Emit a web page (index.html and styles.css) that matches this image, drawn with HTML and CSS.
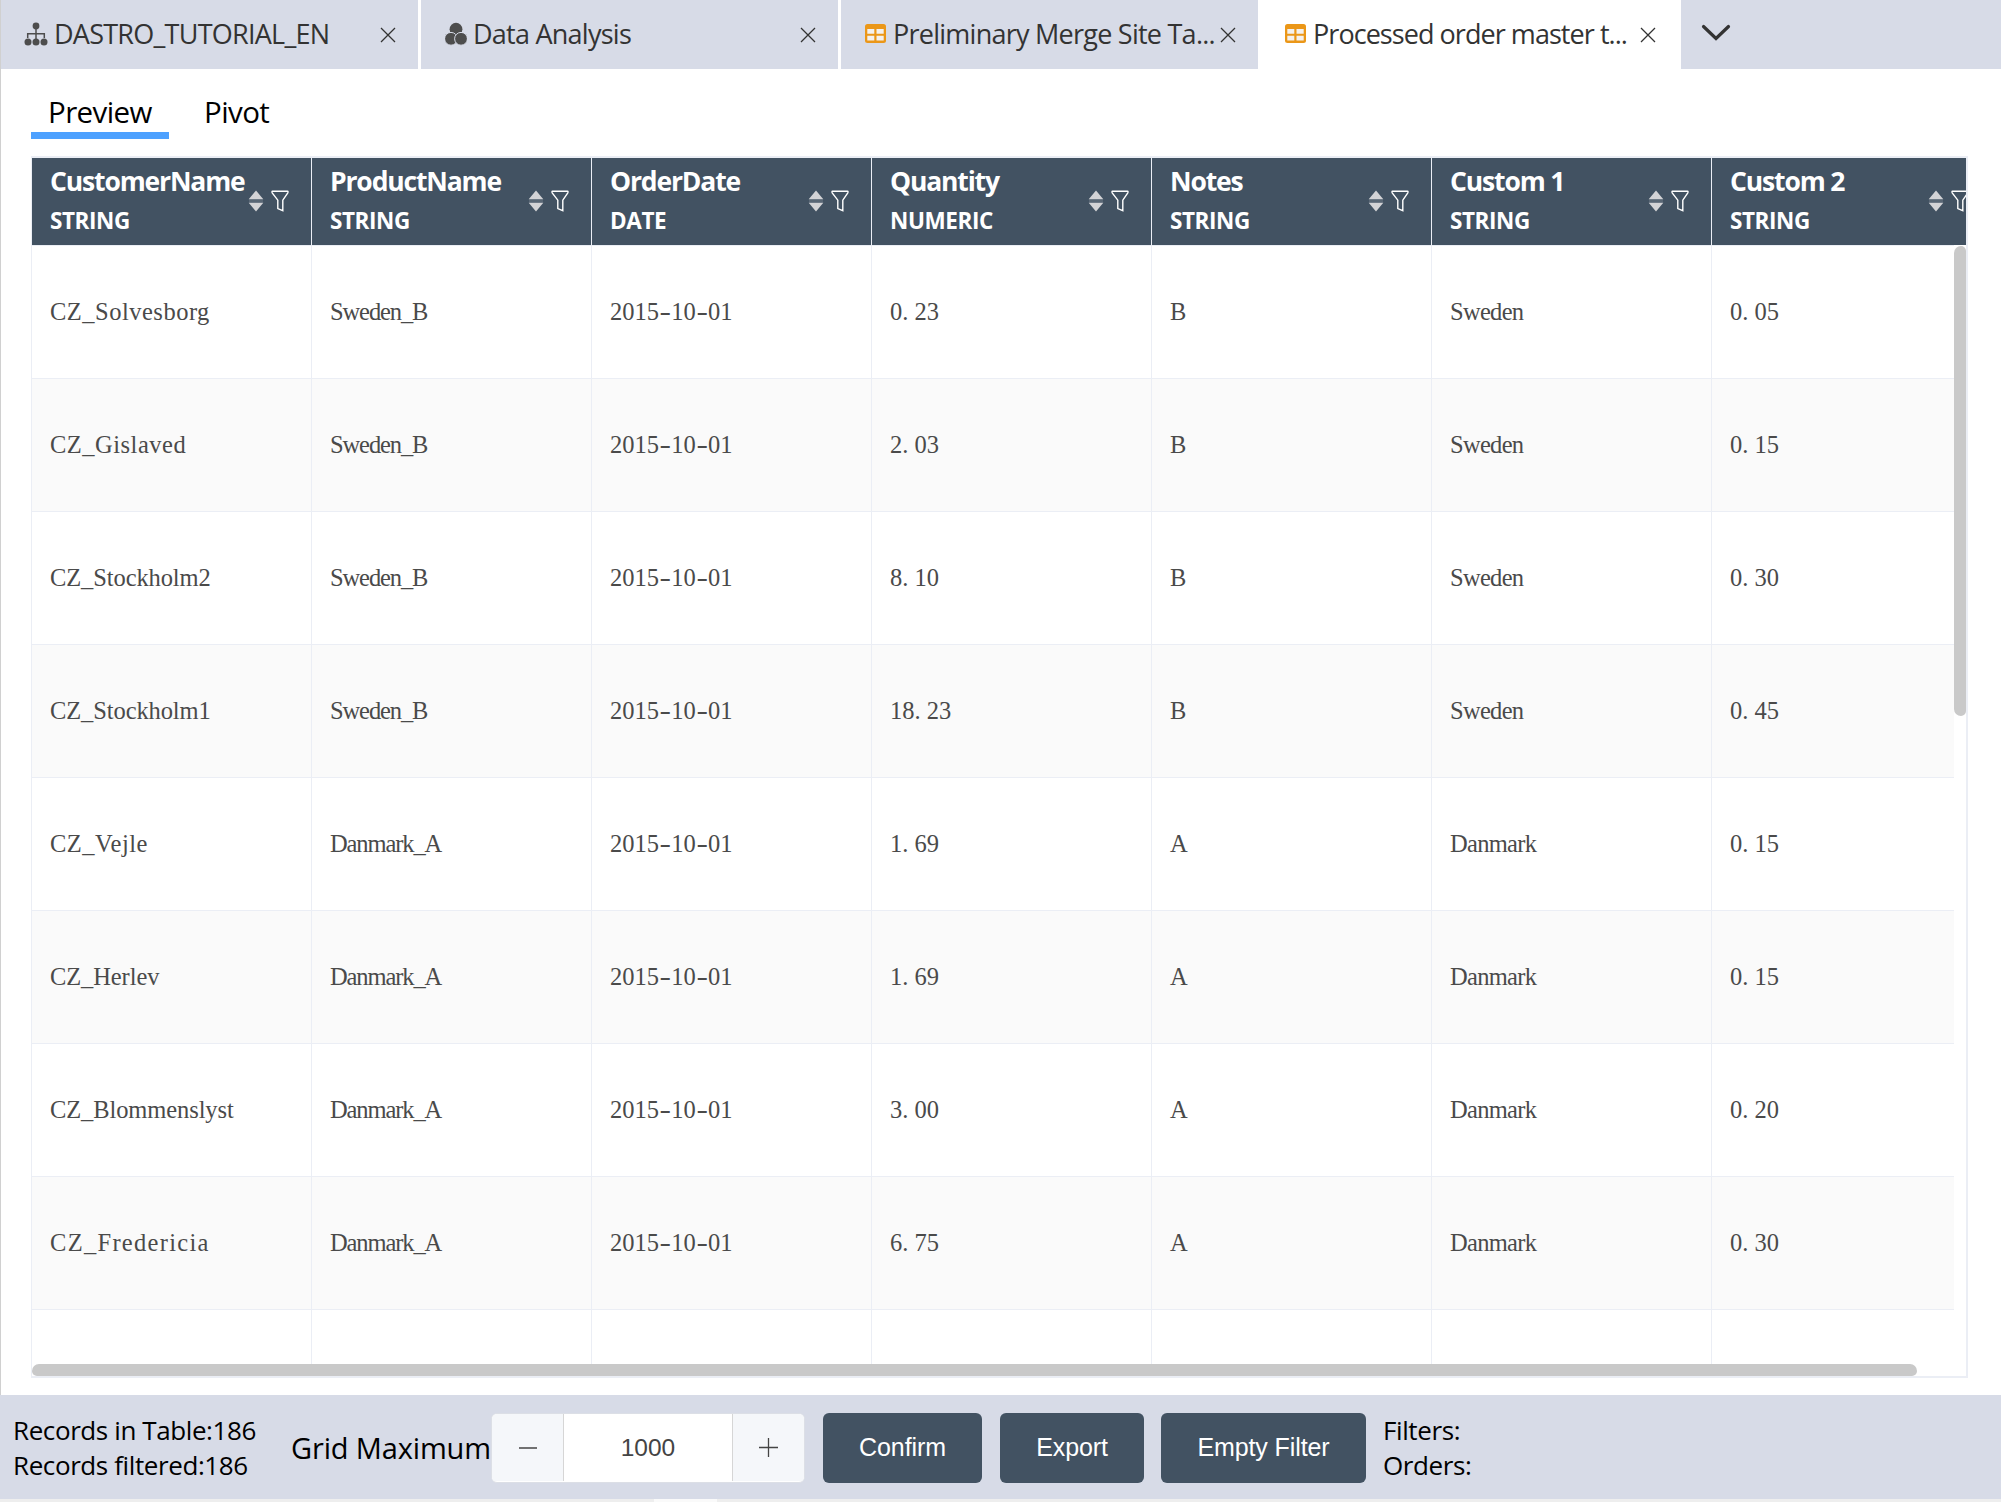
FILE: index.html
```html
<!DOCTYPE html>
<html lang="en">
<head>
    <meta charset="UTF-8">
    <meta name="viewport" content="width=device-width, initial-scale=1.0">
    <title>Processed order master table</title>
    <link rel="stylesheet" href="styles.css">
</head>
<body>
    <!-- icons shared by the tabs and the grid header -->
    <svg class="symbols">
        <symbol id="close" viewBox="0 0 16 16"><path d="M1 1L15 15M15 1L1 15" fill="none" stroke="#333" stroke-width="1.3"/></symbol>
        <symbol id="tree" viewBox="0 0 24 24">
            <circle cx="12" cy="4" r="3.4"/><circle cx="4" cy="20" r="3.5"/><circle cx="12" cy="20" r="3.5"/><circle cx="20" cy="20" r="3.5"/>
            <path d="M12 6V17M3.7 16V11.7H20.3V16" fill="none" stroke="#4d4d4d" stroke-width="1.5"/>
        </symbol>
        <symbol id="cubes" viewBox="0 0 22 24">
            <circle cx="11" cy="7.2" r="6.4"/>
            <circle cx="6" cy="16.8" r="6.4" stroke="#d7dbe7" stroke-width="1"/>
            <circle cx="16" cy="16.8" r="6.4" stroke="#d7dbe7" stroke-width="1"/>
        </symbol>
        <symbol id="grid" viewBox="0 0 22 20">
            <rect x="0" y="0" width="21" height="19" rx="2.5" fill="#eb9718"/>
            <path d="M2.3 5H9.3V9.8H2.3ZM11.5 5H18.7V9.8H11.5ZM2.3 11.7H9.3V16.5H2.3ZM11.5 11.7H18.7V16.5H11.5Z" fill="#f4f1ee"/>
        </symbol>
        <symbol id="sort" viewBox="0 0 16 22">
            <path d="M8 0.5L15.3 9.3H0.7ZM8 21.5L15.3 12.7H0.7Z" fill="#d3d3d6"/>
            <path d="M1 10H15M1 12H15" stroke="#7c8793" stroke-width="0.8"/>
        </symbol>
        <symbol id="funnel" viewBox="0 0 18 22">
            <path d="M1.5 1.2H16.5Q17.4 1.4 16.8 2.8L11.8 10.2V20.6L6.8 18.6V10.2L1.2 2.8Q0.6 1.4 1.5 1.2Z" fill="none" stroke="#fff" stroke-width="1.4"/>
        </symbol>
    </svg>

    <div class="page">
        <div class="tabs">
            <div class="tab">
                <svg class="tab-icon tree"><use href="#tree"/></svg>
                <span class="tab-title">DASTRO_TUTORIAL_EN</span>
                <svg class="close"><use href="#close"/></svg>
            </div>
            <div class="tab">
                <svg class="tab-icon"><use href="#cubes"/></svg>
                <span class="tab-title">Data Analysis</span>
                <svg class="close"><use href="#close"/></svg>
            </div>
            <div class="tab">
                <svg class="tab-icon grid-icon"><use href="#grid"/></svg>
                <span class="tab-title">Preliminary Merge Site Ta...</span>
                <svg class="close"><use href="#close"/></svg>
            </div>
            <div class="tab active">
                <svg class="tab-icon grid-icon"><use href="#grid"/></svg>
                <span class="tab-title">Processed order master t...</span>
                <svg class="close"><use href="#close"/></svg>
            </div>
            <div class="more">
                <svg viewBox="0 0 30 18" width="30" height="18"><path d="M2.5 2.5L15 14.5L27.5 2.5" fill="none" stroke="#333" stroke-width="3.2" stroke-linecap="round"/></svg>
            </div>
        </div>

        <div class="views">
            <div class="view selected">Preview</div>
            <div class="view">Pivot</div>
        </div>

        <div class="table-box">
            <table class="head">
                <tr>
                    <th><div class="th"><div><p class="name">CustomerName</p><p class="type">STRING</p></div><div class="tools"><svg class="sort"><use href="#sort"/></svg><svg class="funnel"><use href="#funnel"/></svg></div></div></th>
                    <th><div class="th"><div><p class="name">ProductName</p><p class="type">STRING</p></div><div class="tools"><svg class="sort"><use href="#sort"/></svg><svg class="funnel"><use href="#funnel"/></svg></div></div></th>
                    <th><div class="th"><div><p class="name">OrderDate</p><p class="type">DATE</p></div><div class="tools"><svg class="sort"><use href="#sort"/></svg><svg class="funnel"><use href="#funnel"/></svg></div></div></th>
                    <th><div class="th"><div><p class="name">Quantity</p><p class="type">NUMERIC</p></div><div class="tools"><svg class="sort"><use href="#sort"/></svg><svg class="funnel"><use href="#funnel"/></svg></div></div></th>
                    <th><div class="th"><div><p class="name">Notes</p><p class="type">STRING</p></div><div class="tools"><svg class="sort"><use href="#sort"/></svg><svg class="funnel"><use href="#funnel"/></svg></div></div></th>
                    <th><div class="th"><div><p class="name">Custom 1</p><p class="type">STRING</p></div><div class="tools"><svg class="sort"><use href="#sort"/></svg><svg class="funnel"><use href="#funnel"/></svg></div></div></th>
                    <th><div class="th"><div><p class="name">Custom 2</p><p class="type">STRING</p></div><div class="tools"><svg class="sort"><use href="#sort"/></svg><svg class="funnel"><use href="#funnel"/></svg></div></div></th>
                </tr>
            </table>
            <div class="scroll-area">
                <table class="rows">
                    <tr><td class="customer">CZ_Solvesborg</td><td class="product">Sweden_B</td><td>2015<b>-</b>10<b>-</b>01</td><td>0<i>.</i>23</td><td>B</td><td class="country">Sweden</td><td>0<i>.</i>05</td></tr>
                    <tr><td class="customer">CZ_Gislaved</td><td class="product">Sweden_B</td><td>2015<b>-</b>10<b>-</b>01</td><td>2<i>.</i>03</td><td>B</td><td class="country">Sweden</td><td>0<i>.</i>15</td></tr>
                    <tr><td class="customer tight">CZ_Stockholm2</td><td class="product">Sweden_B</td><td>2015<b>-</b>10<b>-</b>01</td><td>8<i>.</i>10</td><td>B</td><td class="country">Sweden</td><td>0<i>.</i>30</td></tr>
                    <tr><td class="customer tight">CZ_Stockholm1</td><td class="product">Sweden_B</td><td>2015<b>-</b>10<b>-</b>01</td><td>18<i>.</i>23</td><td>B</td><td class="country">Sweden</td><td>0<i>.</i>45</td></tr>
                    <tr><td class="customer">CZ_Vejle</td><td class="product">Danmark_A</td><td>2015<b>-</b>10<b>-</b>01</td><td>1<i>.</i>69</td><td>A</td><td class="country">Danmark</td><td>0<i>.</i>15</td></tr>
                    <tr><td class="customer tight">CZ_Herlev</td><td class="product">Danmark_A</td><td>2015<b>-</b>10<b>-</b>01</td><td>1<i>.</i>69</td><td>A</td><td class="country">Danmark</td><td>0<i>.</i>15</td></tr>
                    <tr><td class="customer tight">CZ_Blommenslyst</td><td class="product">Danmark_A</td><td>2015<b>-</b>10<b>-</b>01</td><td>3<i>.</i>00</td><td>A</td><td class="country">Danmark</td><td>0<i>.</i>20</td></tr>
                    <tr><td class="customer wide">CZ_Fredericia</td><td class="product">Danmark_A</td><td>2015<b>-</b>10<b>-</b>01</td><td>6<i>.</i>75</td><td>A</td><td class="country">Danmark</td><td>0<i>.</i>30</td></tr>
                    <tr><td></td><td></td><td></td><td></td><td></td><td></td><td></td></tr>
                </table>
                <div class="scrollbar-y"></div>
                <div class="scrollbar-x"></div>
            </div>
        </div>
    </div>

    <div class="footer">
        <div class="records">
            <p>Records in Table:186</p>
            <p>Records filtered:186</p>
        </div>
        <div class="max-label">Grid Maximum</div>
        <div class="number">
            <div class="step minus"><svg viewBox="0 0 18 18" width="18" height="18"><path d="M0 9H18" stroke="#444" stroke-width="1.4"/></svg></div>
            <div class="value">1000</div>
            <div class="step plus"><svg viewBox="0 0 19 19" width="19" height="19"><path d="M0 9.5H19M9.5 0V19" stroke="#444" stroke-width="1.3"/></svg></div>
        </div>
        <button class="confirm">Confirm</button>
        <button class="export">Export</button>
        <button class="empty">Empty Filter</button>
        <div class="filters">
            <p>Filters:</p>
            <p>Orders:</p>
        </div>
    </div>
    <div class="bottom-strip"><div class="strip-handle"></div></div>
</body>
</html>
```
FILE: styles.css
```css
* {
    box-sizing: border-box;
}
body {
    margin: 0;
    width: 2001px;
    height: 1502px;
    overflow: hidden;
    background-color: #ffffff;
    font-family: "Segoe UI", "Open Sans", sans-serif;
    color: #000000;
}
p {
    margin: 0;
}
svg {
    display: block;
    flex: none;
}
.symbols {
    display: none;
}
.page {
    height: 1395px;
    border-left: 1px solid #d0d0d0;
}

/* tabs */
.tabs {
    display: flex;
    height: 69px;
}
.tab {
    display: flex;
    align-items: center;
    width: 420px;
    padding: 0 22px 0 23px;
    background-color: #d7dbe7;
    border-right: 3px solid #ffffff;
    color: #333333;
}
.tab.active {
    background-color: #ffffff;
}
.tab-icon {
    width: 22px;
    height: 24px;
    margin: 0 6px 2px 1px;
    fill: #4d4d4d;
}
.tab-icon.tree {
    width: 24px;
    margin: 0 6px 2px 0;
}
.tab-icon.grid-icon {
    height: 20px;
}
.tab-title {
    flex: 1;
    min-width: 0;
    padding-bottom: 2px;
    font-size: 27px;
    line-height: 40px;
    letter-spacing: -0.75px;
    white-space: nowrap;
}
.active .tab-title {
    letter-spacing: -0.95px;
}
.close {
    width: 16px;
    height: 16px;
}
.more {
    flex: 1;
    padding: 24px 0 0 20px;
    background-color: #d7dbe7;
}

/* preview / pivot */
.views {
    display: flex;
    height: 87px;
    padding: 21px 0 0 30px;
}
.view {
    height: 49px;
    padding: 0 17px;
    font-size: 29.5px;
    line-height: 44px;
    letter-spacing: -0.6px;
}
.view.selected {
    width: 138px;
    margin-right: 18px;
    border-bottom: 7px solid #4da1ff;
}

/* grid */
.table-box {
    width: 1937px;
    height: 1222px;
    margin-left: 30px;
    border: 2px solid #ebeef5;
    border-left-width: 1px;
    overflow: hidden;
}
table {
    table-layout: fixed;
    width: 1960px;
    border-collapse: separate;
    border-spacing: 0;
}
th {
    width: 280px;
    height: 87px;
    padding: 0;
    background-color: #425262;
    border-right: 1px solid #ebeef5;
    color: #ffffff;
    text-align: left;
}
.th {
    display: flex;
    justify-content: space-between;
    align-items: center;
    height: 87px;
    padding: 0 22px 2px 18px;
}
.name {
    font-size: 26.5px;
    line-height: 39px;
    letter-spacing: -1.15px;
}
.type {
    font-size: 22.5px;
    line-height: 39px;
    letter-spacing: -0.4px;
}
.tools {
    display: flex;
    gap: 7px;
}
.sort {
    width: 16px;
    height: 22px;
}
.funnel {
    width: 18px;
    height: 22px;
}
.scroll-area {
    position: relative;
    height: 1131px;
    padding-right: 12px;
    overflow: hidden;
}
.rows {
    border-top: 1px solid #ebeef5;
}
td {
    width: 280px;
    height: 133px;
    padding: 0 18px;
    border-right: 1px solid #ebeef5;
    border-bottom: 1px solid #ebeef5;
    font-family: NSimSun, "Liberation Serif", serif;
    font-size: 24.5px;
    color: #4a4a4a;
    white-space: nowrap;
}
tr:nth-child(even) td {
    background-color: #fafafa;
}
/* punctuation takes a full half-width cell, like the digits */
td i {
    font-style: normal;
    letter-spacing: 6px;
}
td b {
    display: inline-block;
    width: 0.5em;
    font-weight: normal;
    text-align: center;
    transform: scaleX(1.4);
}
.customer {
    letter-spacing: 0.5px;
}
.customer.tight {
    letter-spacing: -0.1px;
}
.customer.wide {
    letter-spacing: 1.3px;
}
.product {
    letter-spacing: -1.1px;
}
.country {
    letter-spacing: -0.7px;
}

/* scrollbars sit over the rows */
.scrollbar-y {
    position: absolute;
    top: 0;
    right: 0;
    width: 12px;
    height: 100%;
    background-color: #ffffff;
}
.scrollbar-y::before {
    content: "";
    display: block;
    height: 470px;
    margin-top: 1px;
    background-color: #c9c9c9;
    border-radius: 7px 5px 5px 7px;
}
.scrollbar-x {
    position: absolute;
    left: 0;
    bottom: 0;
    width: 100%;
    height: 12px;
    background-color: #ffffff;
}
.scrollbar-x::before {
    content: "";
    display: block;
    width: 1885px;
    height: 12px;
    background-color: #c9c9c9;
    border-radius: 7px 7px 5px 5px;
}

/* footer */
.footer {
    display: flex;
    height: 104px;
    padding: 18px 0 0 13px;
    background-color: #d7dbe7;
}
.records, .filters {
    font-size: 26px;
    line-height: 35px;
    letter-spacing: -0.4px;
    white-space: nowrap;
}
.records {
    width: 278px;
}
.max-label {
    width: 200px;
    font-size: 29px;
    line-height: 70px;
    letter-spacing: -0.15px;
    white-space: nowrap;
}
.number {
    display: flex;
    width: 314px;
    height: 70px;
    margin-right: 18px;
    background-color: #ffffff;
    border: 1px solid #dcdfe6;
    border-radius: 6px;
    overflow: hidden;
}
.step {
    display: flex;
    justify-content: center;
    align-items: center;
    width: 72px;
    height: 67px;
    background-color: #f5f7fa;
}
.minus {
    border-right: 1px solid #d6d6d6;
}
.plus {
    border-left: 1px solid #d6d6d6;
}
.value {
    flex: 1;
    font-family: "Liberation Sans", sans-serif;
    font-size: 24.5px;
    line-height: 67px;
    text-align: center;
    color: #444444;
}
button {
    height: 70px;
    margin: 0 17px 0 0;
    padding: 0 0 1px;
    border: none;
    border-radius: 6px;
    background-color: #425262;
    color: #ffffff;
    font-family: "Liberation Sans", sans-serif;
    font-size: 25px;
    letter-spacing: -0.1px;
    white-space: nowrap;
}
.confirm {
    width: 159px;
    margin-right: 18px;
}
.export {
    width: 144px;
}
.empty {
    width: 205px;
}
.bottom-strip {
    display: flex;
    height: 3px;
    padding-left: 654px;
    background-color: #eeeeee;
}
.strip-handle {
    width: 63px;
    background-color: #fafafa;
}
```
